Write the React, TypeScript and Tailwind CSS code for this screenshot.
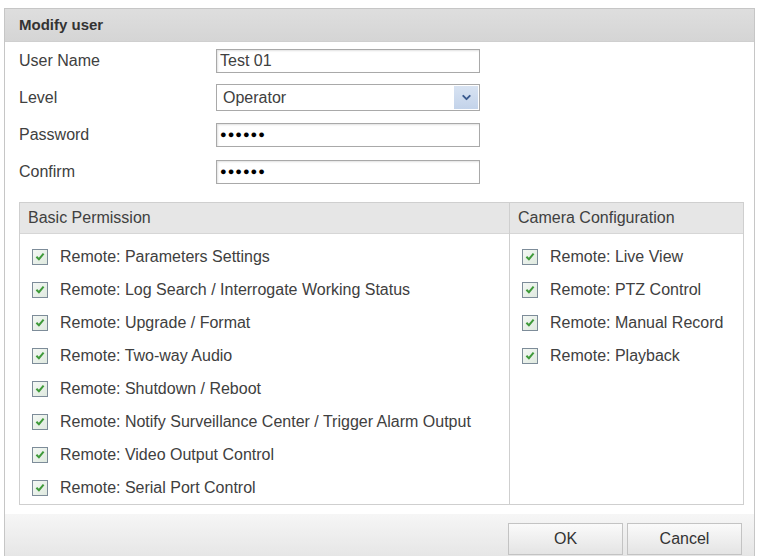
import { ChevronDown } from 'lucide-react'

const basic = [
  'Remote: Parameters Settings',
  'Remote: Log Search / Interrogate Working Status',
  'Remote: Upgrade / Format',
  'Remote: Two-way Audio',
  'Remote: Shutdown / Reboot',
  'Remote: Notify Surveillance Center / Trigger Alarm Output',
  'Remote: Video Output Control',
  'Remote: Serial Port Control',
]

const camera = [
  'Remote: Live View',
  'Remote: PTZ Control',
  'Remote: Manual Record',
  'Remote: Playback',
]

function Check() {
  return (
    <span className="w-[16px] h-[16px] shrink-0 border border-[#7d8c99] bg-gradient-to-br from-[#f4f8f4] to-[#dfe9df] flex items-center justify-center">
      <svg width="10" height="9" viewBox="0 0 11 10">
        <path d="M1.5 5.2 L4.3 8 L9.5 1.8" fill="none" stroke="#3f9a3a" strokeWidth="2.2" />
      </svg>
    </span>
  )
}

function Perm({ label }: { label: string }) {
  return (
    <div className="h-[33px] flex items-center gap-[12px] pl-[12px]">
      <Check />
      <span>{label}</span>
    </div>
  )
}

function Row({ label, children }: { label: string; children: React.ReactNode }) {
  return (
    <div className="h-[37px] flex items-center">
      <span className="w-[211px] pl-[14px]">{label}</span>
      {children}
    </div>
  )
}

const inputCls =
  'w-[264px] h-[24px] border border-[#a9a9a9] shadow-[inset_1px_1px_2px_rgba(0,0,0,0.12)] bg-white flex items-center px-[3px]'

export default function App() {
  return (
    <div
      className="w-[759px] h-[556px] bg-white overflow-hidden pt-[8px] pl-[4px] text-[16px] text-[#404040]"
      style={{ fontFamily: '"Liberation Sans", Arial, sans-serif' }}
    >
      <div className="w-[751px] h-[560px] border border-[#c6c6c6] flex flex-col">
        <div className="h-[33px] bg-gradient-to-b from-[#dedede] to-[#d5d5d5] border-b border-[#cfcfcf] flex items-center pl-[14px] font-bold text-[15px] text-[#333]">
          Modify user
        </div>

        <Row label="User Name">
          <div className={inputCls}>Test 01</div>
        </Row>
        <Row label="Level">
          <div className="w-[264px] h-[27px] border border-[#a9a9a9] bg-white flex items-center pl-[6px] pr-[1px]">
            <span className="flex-1">Operator</span>
            <span className="w-[24px] h-[23px] bg-gradient-to-b from-[#d8e3f2] to-[#c3d3ea] flex items-center justify-center">
              <ChevronDown size={13} strokeWidth={3.5} className="text-[#3a5a8e]" />
            </span>
          </div>
        </Row>
        <Row label="Password">
          <div className={`${inputCls} text-[11px] tracking-[1px] text-black`}>●●●●●●</div>
        </Row>
        <Row label="Confirm">
          <div className={`${inputCls} text-[11px] tracking-[1px] text-black`}>●●●●●●</div>
        </Row>

        <div className="mt-[12px] ml-[14px] w-[725px] border border-[#cfcfcf] flex">
          <div className="w-[490px] border-r border-[#cfcfcf]">
            <div className="h-[31px] bg-[#e6e6e6] border-b border-[#d6d6d6] flex items-center pl-[8px]">
              Basic Permission
            </div>
            <div className="pt-[6px]">
              {basic.map(b => (
                <Perm key={b} label={b} />
              ))}
            </div>
          </div>
          <div className="flex-1">
            <div className="h-[31px] bg-[#e6e6e6] border-b border-[#d6d6d6] flex items-center pl-[8px]">
              Camera Configuration
            </div>
            <div className="pt-[6px]">
              {camera.map(c => (
                <Perm key={c} label={c} />
              ))}
            </div>
          </div>
        </div>

        <div className="mt-[9px] flex-1 bg-gradient-to-b from-[#f6f6f6] to-[#e2e2e2] flex justify-end gap-[4px] pt-[9px] pr-[12px]">
          <button className="w-[115px] h-[32px] border border-[#c3c3c3] bg-gradient-to-b from-[#fafafa] to-[#e4e4e4] text-[#333]">
            OK
          </button>
          <button className="w-[115px] h-[32px] border border-[#c3c3c3] bg-gradient-to-b from-[#fafafa] to-[#e4e4e4] text-[#333]">
            Cancel
          </button>
        </div>
      </div>
    </div>
  )
}
